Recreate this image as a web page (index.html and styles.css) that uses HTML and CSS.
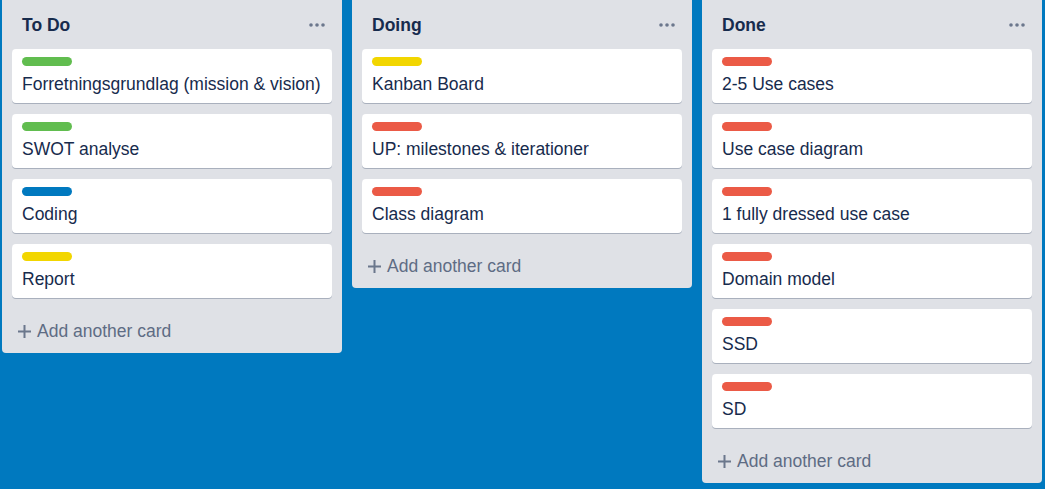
FILE: index.html
```html
<!DOCTYPE html>
<html lang="da">
<head>
<meta charset="utf-8">
<title>Board</title>
<link rel="stylesheet" href="styles.css">
</head>
<body>
<div class="board">
  <section class="list">
    <header class="list-header">
      <h2 class="list-title">To Do</h2>
      <svg class="dots" width="16" height="4" viewBox="0 0 16 4"><circle cx="2" cy="2" r="1.8"/><circle cx="8" cy="2" r="1.8"/><circle cx="14" cy="2" r="1.8"/></svg>
    </header>
    <div class="cards">
      <div class="card"><span class="label green"></span><p class="card-title">Forretningsgrundlag (mission &amp; vision)</p></div>
      <div class="card"><span class="label green"></span><p class="card-title">SWOT analyse</p></div>
      <div class="card"><span class="label blue"></span><p class="card-title">Coding</p></div>
      <div class="card"><span class="label yellow"></span><p class="card-title">Report</p></div>
    </div>
    <div class="add-card">
      <svg class="plus" width="13" height="13" viewBox="0 0 13 13"><path d="M6.5 0v13M0 6.5h13"/></svg>
      <span>Add another card</span>
    </div>
  </section>

  <section class="list">
    <header class="list-header">
      <h2 class="list-title">Doing</h2>
      <svg class="dots" width="16" height="4" viewBox="0 0 16 4"><circle cx="2" cy="2" r="1.8"/><circle cx="8" cy="2" r="1.8"/><circle cx="14" cy="2" r="1.8"/></svg>
    </header>
    <div class="cards">
      <div class="card"><span class="label yellow"></span><p class="card-title">Kanban Board</p></div>
      <div class="card"><span class="label red"></span><p class="card-title">UP: milestones &amp; iterationer</p></div>
      <div class="card"><span class="label red"></span><p class="card-title">Class diagram</p></div>
    </div>
    <div class="add-card">
      <svg class="plus" width="13" height="13" viewBox="0 0 13 13"><path d="M6.5 0v13M0 6.5h13"/></svg>
      <span>Add another card</span>
    </div>
  </section>

  <section class="list">
    <header class="list-header">
      <h2 class="list-title">Done</h2>
      <svg class="dots" width="16" height="4" viewBox="0 0 16 4"><circle cx="2" cy="2" r="1.8"/><circle cx="8" cy="2" r="1.8"/><circle cx="14" cy="2" r="1.8"/></svg>
    </header>
    <div class="cards">
      <div class="card"><span class="label red"></span><p class="card-title">2-5 Use cases</p></div>
      <div class="card"><span class="label red"></span><p class="card-title">Use case diagram</p></div>
      <div class="card"><span class="label red"></span><p class="card-title">1 fully dressed use case</p></div>
      <div class="card"><span class="label red"></span><p class="card-title">Domain model</p></div>
      <div class="card"><span class="label red"></span><p class="card-title">SSD</p></div>
      <div class="card"><span class="label red"></span><p class="card-title">SD</p></div>
    </div>
    <div class="add-card">
      <svg class="plus" width="13" height="13" viewBox="0 0 13 13"><path d="M6.5 0v13M0 6.5h13"/></svg>
      <span>Add another card</span>
    </div>
  </section>
</div>
</body>
</html>
```

FILE: styles.css
```css
* { box-sizing: border-box; }

html, body {
  margin: 0;
  padding: 0;
  height: 100%;
}

body {
  background: #0079bf;
  font-family: "Liberation Sans", Arial, sans-serif;
  color: #172b4d;
  overflow: hidden;
}

.board {
  display: flex;
  align-items: flex-start;
  gap: 10px;
  padding-left: 2px;
}

.list {
  width: 340px;
  flex: 0 0 340px;
  background: #dfe1e6;
  border-radius: 0 0 4px 4px;
  display: flex;
  flex-direction: column;
}

.list-header {
  height: 49px;
  display: flex;
  align-items: center;
  justify-content: space-between;
  padding: 0 17px 0 20px;
}

.list-title {
  margin: 0;
  font-size: 17.5px;
  font-weight: bold;
  line-height: 22px;
  color: #172b4d;
}

.dots {
  fill: #6b778c;
  display: block;
}

.cards {
  padding: 0 10px;
  display: flex;
  flex-direction: column;
  gap: 11px;
}

.card {
  background: #fff;
  border-radius: 4px;
  box-shadow: 0 1px 0 rgba(9, 30, 66, 0.25);
  padding: 8px 10px 2px;
  height: 54px;
  display: flex;
  flex-direction: column;
  align-items: flex-start;
}

.label {
  display: block;
  width: 50px;
  height: 9px;
  border-radius: 5px;
  margin-bottom: 6px;
  flex: none;
}

.green { background: #61bd4f; }
.blue { background: #0079bf; }
.yellow { background: #f2d600; }
.red { background: #eb5a46; }

.card-title {
  margin: 0;
  font-size: 17.5px;
  line-height: 25px;
  color: #172b4d;
  white-space: nowrap;
}

.add-card {
  height: 55px;
  display: flex;
  align-items: center;
  gap: 6px;
  padding: 12px 0 0 16px;
  color: #5e6c84;
  font-size: 17.5px;
}

.plus {
  stroke: #6b778c;
  stroke-width: 2;
  fill: none;
  display: block;
}
```
